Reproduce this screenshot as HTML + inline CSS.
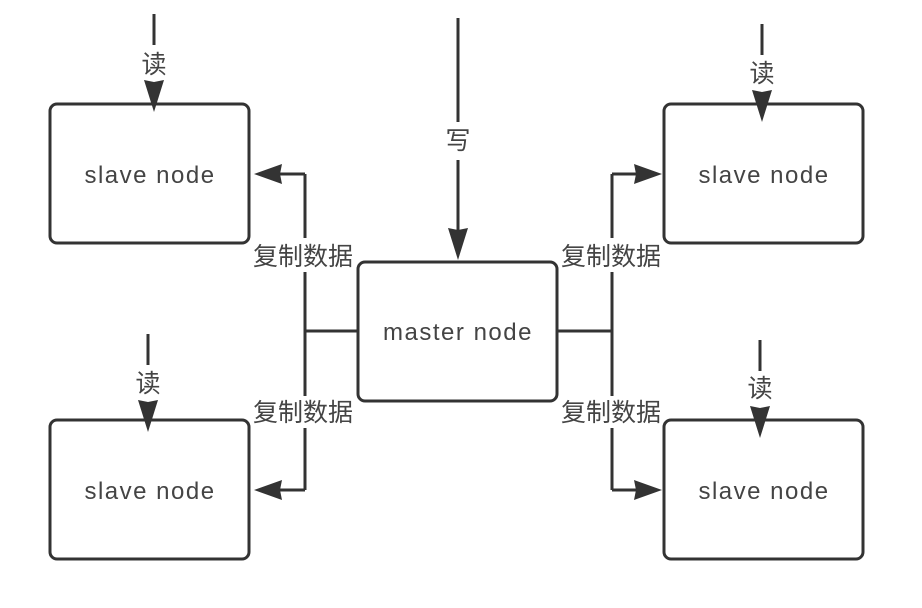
<!DOCTYPE html>
<html><head><meta charset="utf-8"><style>
html,body{margin:0;padding:0;background:#fff;width:922px;height:608px;overflow:hidden}
text{font-family:"Liberation Sans","Noto Sans CJK SC",sans-serif;fill:#444}
</style></head><body>
<svg width="922" height="608" viewBox="0 0 922 608" xmlns="http://www.w3.org/2000/svg">
<g fill="none" stroke="#333" stroke-width="3">
<rect x="50" y="104" width="199" height="139" rx="7"/>
<rect x="50" y="420" width="199" height="139" rx="7"/>
<rect x="664" y="104" width="199" height="139" rx="7"/>
<rect x="664" y="420" width="199" height="139" rx="7"/>
<rect x="358" y="262" width="199" height="139" rx="7"/>
<path d="M305 174V238M305 272V396M305 428V490M305 331H358M305 174H280M305 490H280"/>
<path d="M612 174V238M612 272V396M612 428V490M557 331H612M612 174H636M612 490H636"/>
<path d="M154 14V45M154 82V90"/>
<path d="M762 24V55M762 92V100"/>
<path d="M148 334V365M148 402V410"/>
<path d="M760 340V371M760 408V416"/>
<path d="M458 18V122M458 160V236"/>
</g>
<g fill="#333">
<polygon points="254,174 282,164 280,174 282,184"/>
<polygon points="254,490 282,480 280,490 282,500"/>
<polygon points="662,174 634,164 636,174 634,184"/>
<polygon points="662,490 634,480 636,490 634,500"/>
<polygon points="154,112 144,80 154,82 164,80"/>
<polygon points="762,122 752,90 762,92 772,90"/>
<polygon points="148,432 138,400 148,402 158,400"/>
<polygon points="760,438 750,406 760,408 770,406"/>
<polygon points="458,260 448,228 458,230 468,228"/>
</g>
<g font-size="24" text-anchor="middle" letter-spacing="1.5">
<text x="150" y="183">slave node</text>
<text x="150" y="499">slave node</text>
<text x="764" y="183">slave node</text>
<text x="764" y="499">slave node</text>
<text x="458" y="340">master node</text>
</g>
<g font-size="25" text-anchor="middle">
<text x="154" y="73">读</text>
<text x="762" y="82">读</text>
<text x="148" y="392">读</text>
<text x="760" y="397">读</text>
<text x="458" y="149">写</text>
<text x="303" y="265">复制数据</text>
<text x="303" y="421">复制数据</text>
<text x="611" y="265">复制数据</text>
<text x="611" y="421">复制数据</text>
</g>
</svg>
</body></html>
